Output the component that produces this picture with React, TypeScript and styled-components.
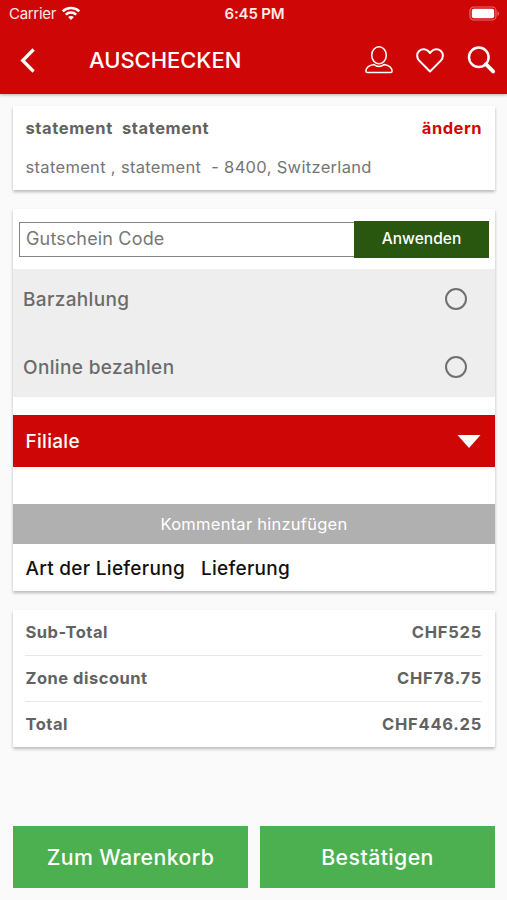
import React from "react";
import styled, { createGlobalStyle } from "styled-components";

const GlobalStyle = createGlobalStyle`
  *, *::before, *::after { box-sizing: border-box; }
  body {
    margin: 0;
    background: #fafafa;
    font-family: Inter, "Liberation Sans", sans-serif;
    -webkit-font-smoothing: antialiased;
  }
  button, input { font-family: inherit; border: 0; padding: 0; margin: 0; border-radius: 0; }
`;

const red = "#cf0606";

const Screen = styled.div`
  width: 507px;
  height: 900px;
  display: flex;
  flex-direction: column;
  overflow: hidden;
  background: #fafafa;
`;

const Header = styled.header`
  height: 94px;
  flex: none;
  background: ${red};
  color: #fff;
  box-shadow: 0 1px 3px rgba(0, 0, 0, 0.3);
`;

const StatusBar = styled.div`
  height: 28px;
  display: grid;
  grid-template-columns: 1fr auto 1fr;
  align-items: center;
  padding: 0 7px 2px 9px;
  color: #ffe9e9;
`;

const Carrier = styled.div`
  display: flex;
  align-items: center;
  gap: 5px;
  font-size: 15px;
  letter-spacing: -0.3px;
`;

const Clock = styled.div`
  font-size: 15px;
  font-weight: 600;
  letter-spacing: -0.15px;
`;

const Battery = styled.svg`
  justify-self: end;
  display: block;
`;

const Toolbar = styled.div`
  height: 66px;
  display: flex;
  align-items: center;
  padding: 0 11px 2px 20px;
`;

const Title = styled.h1`
  flex: 1;
  margin: 0 0 0 53px;
  font-size: 22px;
  font-weight: 500;
  line-height: 28px;
  letter-spacing: -0.03px;
`;

const IconButton = styled.button`
  display: flex;
  background: none;
  color: inherit;
`;

const Actions = styled.div`
  display: flex;
  align-items: center;
  gap: 23px;
`;

const Content = styled.main`
  flex: 1;
  display: flex;
  flex-direction: column;
  gap: 19px;
  padding: 12px 12px 12px 13px;
`;

const Card = styled.section<{ $height: number }>`
  flex: none;
  height: ${(p) => p.$height}px;
  display: flex;
  flex-direction: column;
  background: #fff;
  box-shadow: 0 2px 3px rgba(0, 0, 0, 0.26);
`;

const Address = styled.div`
  display: flex;
  flex-direction: column;
  gap: 17px;
  padding: 11px 13px 0 12.5px;
  color: #757575;
`;

const AddressHead = styled.div`
  display: flex;
  justify-content: space-between;
  line-height: 22px;
  font-size: 16.5px;
  font-weight: 650;
  letter-spacing: 0.61px;
  white-space: pre;
  color: #626262;
`;

const Change = styled.a`
  color: ${red};
  font-weight: 700;
  letter-spacing: 0.5px;
`;

const AddressLine = styled.div`
  font-size: 16.5px;
  line-height: 22px;
  letter-spacing: 0.32px;
  white-space: pre;
`;

const Coupon = styled.form`
  display: flex;
  align-items: center;
  height: 60px;
  padding: 0 6px;
`;

const CouponInput = styled.input`
  flex: 1;
  min-width: 0;
  height: 35px;
  padding: 0 6px 1px;
  border: 1px solid #858585;
  border-right: 0;
  background: #fff;
  font-size: 18px;
  letter-spacing: 0.16px;
  outline: 0;
  &::placeholder { color: #777; opacity: 1; }
`;

const Apply = styled.button`
  width: 135px;
  height: 37px;
  padding-bottom: 1px;
  background: #29570f;
  color: #fff;
  font-size: 15.5px;
  font-weight: 500;
  letter-spacing: 0.02px;
`;

const Payments = styled.div`
  height: 128px;
  flex: none;
  background: #eee;
`;

const Payment = styled.label`
  display: flex;
  align-items: center;
  justify-content: space-between;
  height: 60px;
  padding: 0 28px 0 10px;
  color: #6b6b6b;
  font-size: 19px;
  font-weight: 500;
  letter-spacing: 0.36px;
  & + & { margin-top: 8px; }
`;

const Radio = styled.span`
  width: 22px;
  height: 22px;
  margin-right: 0.5px;
  border: 2px solid #707070;
  border-radius: 50%;
`;

const Branch = styled.button`
  display: flex;
  align-items: center;
  justify-content: space-between;
  flex: none;
  height: 52px;
  margin-top: 18px;
  padding: 0 14.5px 0 12.5px;
  background: ${red};
  color: #fff;
  font-size: 19px;
  font-weight: 500;
  letter-spacing: 0.3px;
`;

const Comment = styled.button`
  flex: none;
  height: 40px;
  margin-top: 37px;
  padding-bottom: 1px;
  background: #b0b0b0;
  color: #fff;
  font-size: 16.5px;
  letter-spacing: 0.25px;
`;

const Delivery = styled.div`
  flex: 1;
  display: flex;
  align-items: center;
  gap: 16px;
  padding: 1px 12.5px 0;
  color: #111;
  font-size: 19px;
  font-weight: 500;
  letter-spacing: 0.29px;
`;

const TotalRow = styled.div`
  flex: 1;
  display: flex;
  align-items: center;
  justify-content: space-between;
  margin: 0 13px 0 12px;
  padding: 0 0 2px 0.5px;
  color: #626262;
  font-size: 16.5px;
  font-weight: 650;
  letter-spacing: 0.5px;
  & + & { border-top: 1px solid #e8e8e8; }
`;

const Amount = styled.span`
  letter-spacing: 0.75px;
`;

const Footer = styled.div`
  display: grid;
  grid-template-columns: 1fr 1fr;
  gap: 12px;
  margin-top: auto;
`;

const Action = styled.button`
  height: 62px;
  padding-bottom: 1px;
  background: #4caf50;
  color: #fff;
  font-size: 21.3px;
  font-weight: 500;
  letter-spacing: 0.4px;
`;

const WifiIcon = () => (
  <svg width="20" height="15" viewBox="0 0 20 15" fill="none" stroke="#fff" strokeWidth="2.5">
    <path d="M1.7 5.4C6.3 0.9 13.7 0.9 18.3 5.4" />
    <path d="M4.8 8.7C7.7 5.9 12.3 5.9 15.2 8.7" />
    <path d="M7.1 11.1C8.7 9.6 11.3 9.6 12.9 11.1L10 14Z" fill="#fff" stroke="none" />
  </svg>
);

const BatteryIcon = () => (
  <Battery width="31" height="15" viewBox="0 0 31 15">
    <rect x="1" y="1" width="26" height="13" rx="3.8" fill="none" stroke="#e46c6c" strokeWidth="1.2" />
    <rect x="2.8" y="2.8" width="22.4" height="9.4" rx="2" fill="#fff" />
    <path d="M28.5 5.2c2 .8 2 3.8 0 4.6z" fill="#e46c6c" />
  </Battery>
);

const BackIcon = () => (
  <svg width="16" height="25" viewBox="0 0 16 25" fill="none" stroke="#fff" strokeWidth="3.2">
    <path d="M13.6 1.5 2.7 12.5l10.9 11" />
  </svg>
);

const PersonIcon = () => (
  <svg width="28" height="28" viewBox="0 0 28 28" fill="none" stroke="#fff" strokeWidth="1.5">
    <ellipse cx="14" cy="9.3" rx="7.3" ry="8.5" />
    <path d="M9 18.6C5.2 19.3 1.2 20.6.9 24.9c0 1 .5 1.5 1.4 1.5h23.4c.9 0 1.4-.5 1.4-1.5-.3-4.3-4.3-5.6-8.1-6.3-3.1 2.3-6.9 2.3-10 0Z" />
  </svg>
);

const HeartIcon = () => (
  <svg width="28" height="25" viewBox="0 0 28 25" fill="none" stroke="#fff" strokeWidth="2" strokeLinejoin="round">
    <path d="M14 23.5 3.2 12.6C.5 9.8.4 5.5 3.1 3 6 .4 10.3.9 12.5 3.3L14 5l1.5-1.7C17.7.9 22 .4 24.9 3c2.7 2.5 2.6 6.8-.1 9.6Z" />
  </svg>
);

const SearchIcon = () => (
  <svg width="29" height="28" viewBox="0 0 29 28" fill="none" stroke="#fff">
    <circle cx="11.8" cy="11.3" r="9.8" strokeWidth="2.5" />
    <path d="m18.9 18.2 7.2 7.2" strokeWidth="3.8" strokeLinecap="round" />
  </svg>
);

const CaretIcon = () => (
  <svg width="24" height="13" viewBox="0 0 24 13" fill="#fff">
    <path d="M.5 0h23L12 13Z" />
  </svg>
);

const totals = [
  ["Sub-Total", "CHF525"],
  ["Zone discount", "CHF78.75"],
  ["Total", "CHF446.25"],
];

export default function App() {
  return (
    <Screen>
      <GlobalStyle />
      <Header>
        <StatusBar>
          <Carrier>Carrier<WifiIcon /></Carrier>
          <Clock>6:45 PM</Clock>
          <BatteryIcon />
        </StatusBar>
        <Toolbar>
          <IconButton aria-label="Zurück"><BackIcon /></IconButton>
          <Title>AUSCHECKEN</Title>
          <Actions>
            <IconButton aria-label="Konto"><PersonIcon /></IconButton>
            <IconButton aria-label="Favoriten"><HeartIcon /></IconButton>
            <IconButton aria-label="Suche"><SearchIcon /></IconButton>
          </Actions>
        </Toolbar>
      </Header>
      <Content>
        <Card $height={84}>
          <Address>
            <AddressHead>
              <span>{"statement  statement"}</span>
              <Change>ändern</Change>
            </AddressHead>
            <AddressLine>{"statement , statement  - 8400, Switzerland"}</AddressLine>
          </Address>
        </Card>
        <Card $height={382}>
          <Coupon>
            <CouponInput placeholder="Gutschein Code" />
            <Apply type="button">Anwenden</Apply>
          </Coupon>
          <Payments>
            <Payment>Barzahlung<Radio /></Payment>
            <Payment>Online bezahlen<Radio /></Payment>
          </Payments>
          <Branch>Filiale<CaretIcon /></Branch>
          <Comment>Kommentar hinzufügen</Comment>
          <Delivery><span>Art der Lieferung</span><span>Lieferung</span></Delivery>
        </Card>
        <Card $height={137}>
          {totals.map(([label, amount]) => (
            <TotalRow key={label}><span>{label}</span><Amount>{amount}</Amount></TotalRow>
          ))}
        </Card>
        <Footer>
          <Action>Zum Warenkorb</Action>
          <Action>Bestätigen</Action>
        </Footer>
      </Content>
    </Screen>
  );
}
